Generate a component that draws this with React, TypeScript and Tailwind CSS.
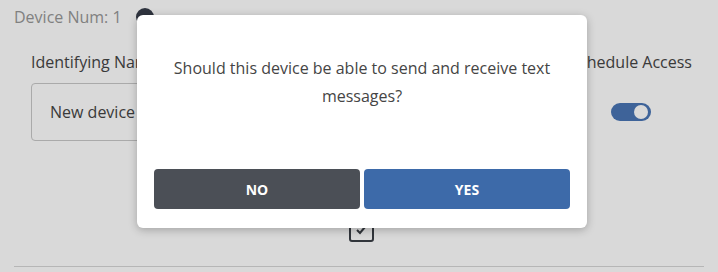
import { useState } from 'react';

// 端末設定フォーム（背景）+ SMS 許可の確認ダイアログ
export default function App() {
  const [smsAllowed, setSmsAllowed] = useState<boolean | null>(null);
  const [scheduleAccess, setScheduleAccess] = useState(true);

  return (
    <div
      className="relative h-[272px] w-[718px] overflow-hidden bg-white text-[#454545]"
      style={{ fontFamily: '"Open Sans", "Noto Sans", sans-serif' }}
    >
      {/* フォーム本体 */}
      <div className="px-[14px] pt-[5px]">
        <div className="flex h-[24px] items-center gap-[14px]">
          <span className="text-[16px] text-[#979797]">Device Num: 1</span>
          <span className="h-[18px] w-[18px] rounded-full bg-[#383e4b]" />
        </div>

        <div className="mt-[21px] flex justify-between pl-[17px] pr-[12px]">
          <div className="w-[300px]">
            <div className="h-[24px] text-[16px] leading-[24px]">Identifying Name</div>
            <div className="mt-[9px] flex h-[58px] items-center rounded-[4px] border border-[#c8c8c8] px-[18px] text-[16px]">
              New device
            </div>
          </div>
          <div className="flex flex-col items-center">
            <div className="h-[24px] text-[16px] leading-[24px]">Schedule Access</div>
            <button
              type="button"
              onClick={() => setScheduleAccess(!scheduleAccess)}
              className="mt-[29px] flex h-[18px] w-[40px] items-center justify-end rounded-full bg-[#4975b4] px-[3px]"
            >
              <span className="h-[14px] w-[14px] rounded-full bg-white" />
            </button>
          </div>
        </div>

        <div className="mt-[77px] flex justify-center pl-[4px]">
          <div className="flex h-[24px] w-[25px] items-center justify-center rounded-[3px] border-2 border-[#3a3f46]">
            <svg width="14" height="14" viewBox="0 0 14 14" fill="none">
              <path d="M3 7l3 3 5-6" stroke="#3a3f46" strokeWidth="2" />
            </svg>
          </div>
        </div>

        <div className="mt-[24px] border-t border-[#d6d6d6]" />
      </div>

      {/* オーバーレイ */}
      <div className="absolute inset-0 bg-[rgba(0,0,0,0.15)]" />

      {/* 確認ダイアログ */}
      <div className="absolute left-[137px] top-[15px] flex h-[213px] w-[450px] flex-col rounded-[6px] bg-white px-[17px] pb-[19px] shadow-[0_2px_8px_rgba(0,0,0,0.25)]">
        <p className="mt-[39px] px-[10px] text-center text-[16px] leading-[28px] text-[#454545]">
          Should this device be able to send and receive text messages?
        </p>
        <div className="mt-auto flex gap-[4px]">
          <button
            type="button"
            onClick={() => setSmsAllowed(false)}
            className="h-[40px] flex-1 rounded-[4px] bg-[#4b4f56] text-[14px] font-bold text-white"
          >
            NO
          </button>
          <button
            type="button"
            onClick={() => setSmsAllowed(true)}
            className="h-[40px] flex-1 rounded-[4px] bg-[#3d6aa9] text-[14px] font-bold text-white"
          >
            YES
          </button>
        </div>
        {smsAllowed !== null && <span className="sr-only">{smsAllowed ? 'yes' : 'no'}</span>}
      </div>
    </div>
  );
}
